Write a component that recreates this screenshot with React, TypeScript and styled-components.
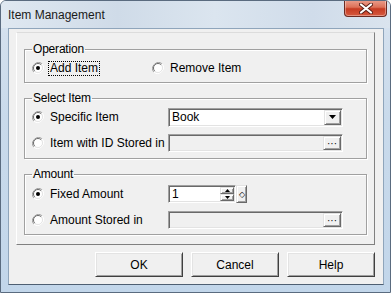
import { createGlobalStyle } from 'styled-components';
import styled from 'styled-components';

const GlobalStyle = createGlobalStyle`
  html, body {
    margin: 0;
    padding: 0;
    background: #ffffff;
  }
  * {
    box-sizing: border-box;
  }
`;

// Outer Vista style window frame
const Window = styled.div`
  width: 391px;
  height: 293px;
  display: flex;
  flex-direction: column;
  border: 1px solid #5a6b7f;
  border-radius: 6px 6px 0 0;
  background: linear-gradient(180deg, #dbe6f1 0%, #d3e0ee 12%, #c9daeb 40%, #c2d6ea 100%);
  font-family: "Liberation Sans", Arial, sans-serif;
  overflow: hidden;
`;

const TitleBar = styled.div`
  height: 27px;
  display: flex;
  justify-content: space-between;
  align-items: flex-start;
  background: linear-gradient(90deg, #dfe8f1 0%, #cfdbe8 30%, #dbe5ef 55%, #d0dcea 80%, #dae4ee 100%);
`;

const Title = styled.div`
  padding: 7px 0 0 7px;
  font-size: 12px;
  color: #1a1a1a;
  line-height: 14px;
`;

const CloseButton = styled.div`
  width: 43px;
  height: 17px;
  margin-right: 3px;
  margin-top: -1px;
  border: 1px solid #6b2a22;
  border-top: none;
  border-radius: 0 0 4px 4px;
  background: linear-gradient(180deg, #eba08e 0%, #dd7158 45%, #c63b22 55%, #d65a3f 100%);
  display: flex;
  align-items: center;
  justify-content: center;
  box-shadow: inset 0 0 0 1px rgba(255, 255, 255, 0.35);
`;

const Client = styled.div`
  flex: 1;
  margin: 0 6px 7px 7px;
  background: #f0f0f0;
  border: 1px solid #8fa5bb;
  border-bottom-color: #4e5f72;
  padding: 3px 8px 0 7px;
  display: flex;
  flex-direction: column;
`;

const Panel = styled.div`
  height: 213px;
  border: 1px solid #a0a0a0;
  border-top-color: #dcdcdc;
  border-left-color: #ffffff;
  border-right-color: #808080;
  border-bottom-color: #808080;
  padding: 9px 7px 0 7px;
  display: flex;
  flex-direction: column;
  gap: 8px;
`;

const Group = styled.fieldset<{ $pt: number; $gap: number; $pb: number }>`
  margin: 0;
  padding: ${(p) => p.$pt}px 0 ${(p) => p.$pb}px 7px;
  border: 1px solid #a0a0a0;
  box-shadow: 1px 1px 0 #ffffff, inset 1px 1px 0 #ffffff;
  display: flex;
  flex-direction: column;
  gap: ${(p) => p.$gap}px;
`;

const Legend = styled.legend`
  margin-left: 0px;
  padding: 0 1px;
  font-size: 12px;
  line-height: 14px;
  color: #000;
  letter-spacing: -0.2px;
`;

const Row = styled.div`
  height: 20px;
  display: grid;
  grid-template-columns: 136px 1fr;
  align-items: center;
`;

const OptionRow = styled.div`
  height: 20px;
  display: flex;
  align-items: center;
`;

const Radio = styled.label<{ $width?: number }>`
  display: flex;
  align-items: center;
  gap: 5px;
  width: ${(p) => (p.$width ? `${p.$width}px` : 'auto')};
  font-size: 12px;
  color: #000;
`;

const RadioText = styled.span<{ $focus?: boolean }>`
  padding: 0 1px;
  line-height: 13px;
  outline: ${(p) => (p.$focus ? '1px dotted #000' : 'none')};
`;

const Sunken = styled.div<{ $width: number; $height: number; $disabled?: boolean }>`
  width: ${(p) => p.$width}px;
  height: ${(p) => p.$height}px;
  border: 1px solid;
  border-color: #a0a0a0 #ffffff #ffffff #a0a0a0;
  box-shadow: inset 1px 1px 0 #696969, inset -1px -1px 0 #e3e3e3;
  background: ${(p) => (p.$disabled ? '#f0f0f0' : '#ffffff')};
  display: flex;
  align-items: stretch;
  padding: 1px;
`;

const FieldText = styled.div`
  flex: 1;
  font-size: 12px;
  line-height: 15px;
  padding-left: 2px;
  color: #000;
`;

const SmallButton = styled.div<{ $width: number }>`
  width: ${(p) => p.$width}px;
  border: 1px solid;
  border-color: #e3e3e3 #696969 #696969 #e3e3e3;
  box-shadow: inset 1px 1px 0 #ffffff, inset -1px -1px 0 #a0a0a0;
  background: #f0f0f0;
  display: flex;
  align-items: center;
  justify-content: center;
  font-size: 10px;
  color: #000;
`;

const SpinGroup = styled.div`
  display: flex;
  align-items: center;
`;

const SpinButtons = styled.div`
  width: 14px;
  display: flex;
  flex-direction: column;
`;

const SpinHalf = styled(SmallButton)`
  width: 14px;
  height: 8px;
`;

const DiamondButton = styled(SmallButton)`
  height: 18px;
  font-size: 8px;
`;

const Footer = styled.div`
  display: flex;
  justify-content: flex-end;
  gap: 8px;
  padding: 7px 0 0 0;
`;

const PushButton = styled.button`
  width: 88px;
  height: 25px;
  padding: 0;
  border: 1px solid;
  border-color: #ffffff #404040 #404040 #ffffff;
  box-shadow: inset 1px 1px 0 #e3e3e3, inset -1px -1px 0 #a0a0a0;
  background: #f0f0f0;
  font-family: "Liberation Sans", Arial, sans-serif;
  font-size: 12px;
  color: #000;
`;

function RadioDot({ checked }: { checked?: boolean }) {
  return (
    <svg width="12" height="12" viewBox="0 0 12 12">
      <path d="M10.2 1.8 A6 6 0 0 0 1.8 10.2" fill="none" stroke="#a0a0a0" strokeWidth="1" />
      <path d="M1.8 10.2 A6 6 0 0 0 10.2 1.8" fill="none" stroke="#ffffff" strokeWidth="1" />
      <circle cx="6" cy="6" r="4.5" fill="#ffffff" />
      <path d="M9.2 2.8 A4.5 4.5 0 0 0 2.8 9.2" fill="none" stroke="#696969" strokeWidth="1" />
      <path d="M2.8 9.2 A4.5 4.5 0 0 0 9.2 2.8" fill="none" stroke="#e3e3e3" strokeWidth="1" />
      {checked && <circle cx="6" cy="6" r="2" fill="#000" />}
    </svg>
  );
}

function DownArrow() {
  return (
    <svg width="7" height="4" viewBox="0 0 7 4">
      <path d="M0 0 L7 0 L3.5 4 Z" fill="#000" />
    </svg>
  );
}

function SpinArrow({ up }: { up?: boolean }) {
  return (
    <svg width="5" height="3" viewBox="0 0 5 3">
      <path d={up ? 'M2.5 0 L5 3 L0 3 Z' : 'M0 0 L5 0 L2.5 3 Z'} fill="#000" />
    </svg>
  );
}

export default function App() {
  return (
    <>
      <GlobalStyle />
      <Window>
        <TitleBar>
          <Title>Item Management</Title>
          <CloseButton>
            <svg width="14" height="11" viewBox="0 0 14 11">
              <path d="M2 1.5 L12 9.5 M12 1.5 L2 9.5" stroke="#5a1f17" strokeWidth="4" strokeLinecap="round" />
              <path d="M2 1.5 L12 9.5 M12 1.5 L2 9.5" stroke="#ffffff" strokeWidth="2.2" strokeLinecap="round" />
            </svg>
          </CloseButton>
        </TitleBar>
        <Client>
          <Panel>
            <Group $pt={2} $gap={6} $pb={4}>
              <Legend>Operation</Legend>
              <OptionRow>
                <Radio $width={120}>
                  <RadioDot checked />
                  <RadioText $focus>Add Item</RadioText>
                </Radio>
                <Radio>
                  <RadioDot />
                  <RadioText>Remove Item</RadioText>
                </Radio>
              </OptionRow>
            </Group>

            <Group $pt={2} $gap={6} $pb={5}>
              <Legend>Select Item</Legend>
              <Row>
                <Radio>
                  <RadioDot checked />
                  <RadioText>Specific Item</RadioText>
                </Radio>
                <Sunken $width={175} $height={19}>
                  <FieldText>Book</FieldText>
                  <SmallButton $width={17}>
                    <DownArrow />
                  </SmallButton>
                </Sunken>
              </Row>
              <Row>
                <Radio>
                  <RadioDot />
                  <RadioText>Item with ID Stored in</RadioText>
                </Radio>
                <Sunken $width={175} $height={18} $disabled>
                  <FieldText />
                  <SmallButton $width={18}>···</SmallButton>
                </Sunken>
              </Row>
            </Group>

            <Group $pt={3} $gap={6} $pb={4}>
              <Legend>Amount</Legend>
              <Row>
                <Radio>
                  <RadioDot checked />
                  <RadioText>Fixed Amount</RadioText>
                </Radio>
                <SpinGroup>
                  <Sunken $width={68} $height={18}>
                    <FieldText>1</FieldText>
                    <SpinButtons>
                      <SpinHalf $width={14}>
                        <SpinArrow up />
                      </SpinHalf>
                      <SpinHalf $width={14}>
                        <SpinArrow />
                      </SpinHalf>
                    </SpinButtons>
                  </Sunken>
                  <DiamondButton $width={11}>◇</DiamondButton>
                </SpinGroup>
              </Row>
              <Row>
                <Radio>
                  <RadioDot />
                  <RadioText>Amount Stored in</RadioText>
                </Radio>
                <Sunken $width={175} $height={18} $disabled>
                  <FieldText />
                  <SmallButton $width={18}>···</SmallButton>
                </Sunken>
              </Row>
            </Group>
          </Panel>
          <Footer>
            <PushButton>OK</PushButton>
            <PushButton>Cancel</PushButton>
            <PushButton>Help</PushButton>
          </Footer>
        </Client>
      </Window>
    </>
  );
}
